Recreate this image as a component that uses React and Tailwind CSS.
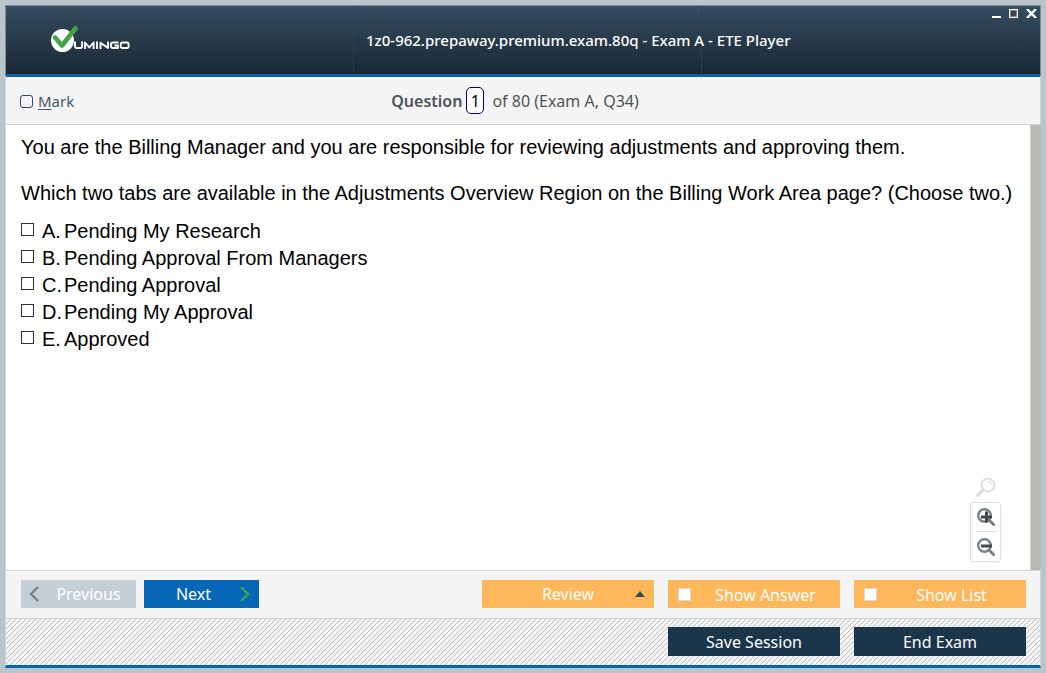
import React from "react";

const options = [
  ["A.", "Pending My Research"],
  ["B.", "Pending Approval From Managers"],
  ["C.", "Pending Approval"],
  ["D.", "Pending My Approval"],
  ["E.", "Approved"],
];

function Logo() {
  return (
    <svg width="80" height="28" viewBox="0 0 80 28" role="img" aria-label="Vumingo">
      <circle cx="11.5" cy="15.5" r="11.5" fill="#fff" />
      <path d="M4 12.5 L11 20.5 L24.5 3.5" fill="none" stroke="#45a545" strokeWidth="4.8" strokeLinecap="round" strokeLinejoin="round" />
      <g fill="none" stroke="#fff" strokeWidth="1.9" strokeLinejoin="round">
        <path d="M24 16.500v4.700q0 1.800 1.800 1.800h3.500q1.800 0 1.800-1.800V16.500" />
        <path d="M34 24v-6.500l4.300 5 4.300-5V24" />
        <path d="M46 16.500V24" />
        <path d="M49.500 24v-6.200l7.500 5.200V16.500" />
        <path d="M67.500 17.500h-5.500q-2 0-2 2V21q0 2 2 2h5v-2.500h-3.500" />
        <rect x="69.800" y="17.500" width="7.800" height="5.500" rx="1.800" />
      </g>
    </svg>
  );
}

function Magnifier({ sign, pale }) {
  return pale ? (
    <svg width="20" height="20" viewBox="0 0 20 20" fill="none" stroke="#e0e0e0" aria-hidden="true">
      <circle cx="12" cy="8" r="6.500" strokeWidth="2.200" />
      <path d="M7 13 L2 18" strokeWidth="3.400" strokeLinecap="round" />
      <path d="M12 4.500q3 0 3.500 3.500" strokeWidth="1.400" />
    </svg>
  ) : (
    <svg width="18" height="18" viewBox="0 0 18 18" fill="none" aria-hidden="true">
      <circle cx="7.500" cy="7.500" r="6.300" stroke="#73828c" strokeWidth="2.400" />
      <path d="M12.300 12.300 L16.500 16.500" stroke="#73828c" strokeWidth="3" strokeLinecap="round" />
      <path d={sign === "+" ? "M4 9h11M9.500 3.500v11" : "M4 8h11"} stroke="#484848" strokeWidth="3" />
    </svg>
  );
}

export default function App() {
  return (
    <div className="flex min-h-screen flex-col bg-[#b9c5cb] p-[5px] font-['Noto_Sans',sans-serif]">
      <main className="flex grow flex-col">
        <header className="grid h-[69px] grid-cols-[348px_348px_1fr] items-center border border-b-0 border-[#7f8c92] bg-linear-to-b from-[#364e62] to-[#1a2733] text-white">
          <div className="flex h-full items-center border-r border-dotted border-[#35407a] pb-[2px] pl-[45px]">
            <Logo />
          </div>
          <h1 className="flex h-full items-center border-r border-[#2f4050] pl-3 text-[15px] font-medium whitespace-nowrap">
            1z0-962.prepaway.premium.exam.80q - Exam A - ETE Player
          </h1>
          <div className="flex h-full items-start justify-end gap-2 pt-[3px] pr-[3px]">
            <button aria-label="Minimize">
              <svg width="9" height="9" viewBox="0 0 9 9"><path d="M0 8h9" stroke="#fff" strokeWidth="2" /></svg>
            </button>
            <button aria-label="Maximize">
              <svg width="9" height="9" viewBox="0 0 9 9" fill="none"><rect x=".5" y=".5" width="8" height="8" stroke="#fff" /><rect x="1.500" y="1.500" width="6" height="6" stroke="#8c8078" /></svg>
            </button>
            <button aria-label="Close">
              <svg width="11" height="9" viewBox="0 0 11 9"><path d="M1 0l9 9M10 0L1 9" stroke="#fff" strokeWidth="2.400" /></svg>
            </button>
          </div>
        </header>

        <section className="grid h-[51px] grid-cols-[1fr_auto_1fr] items-center border-x border-t-3 border-b border-[#d2d2d2] border-t-[#0663b1] bg-[#f4f4f4] pr-4 text-base text-[#4d5358]">
          <label className="flex items-center gap-[5px] pt-px pl-[14px] text-[15px] text-[#44586a]">
            <input type="checkbox" className="size-[13px] appearance-none rounded-[3px] border border-[#34495e] checked:bg-[#34495e]" />
            <span><span className="underline underline-offset-2">M</span>ark</span>
          </label>
          <div className="flex items-center justify-center whitespace-nowrap">
            <label htmlFor="number" className="font-semibold">Question</label>
            <input id="number" defaultValue="1" className="mr-2 ml-1 h-[27px] w-[18px] rounded-[5px] border border-[#000080] bg-white text-center text-black" />
            <span>of 80 (Exam A, Q34)</span>
          </div>
        </section>

        <section className="flex grow border-b border-l border-[#d2d2d2] bg-white font-['Liberation_Sans',sans-serif] text-xl text-black">
          <div className="relative grow pt-2 pl-[15px]">
            <p className="leading-7">You are the Billing Manager and you are responsible for reviewing adjustments and approving them.</p>
            <p className="mt-[18px] leading-7">Which two tabs are available in the Adjustments Overview Region on the Billing Work Area page? (Choose two.)</p>
            <ul className="mt-[10px]">
              {options.map(([letter, text]) => (
                <li key={letter}>
                  <label className="flex h-[27px] items-center">
                    <input type="checkbox" className="mr-2 mb-[2px] size-[13px] appearance-none border border-[#333] checked:bg-[#333]" />
                    <span className="w-[22px]">{letter}</span>
                    <span>{text}</span>
                  </label>
                </li>
              ))}
            </ul>
            <div className="absolute right-[29px] bottom-2 flex w-[31px] flex-col items-center gap-[5px]">
              <button aria-label="Reset zoom"><Magnifier pale /></button>
              <div className="flex w-full flex-col items-center rounded-[3px] border border-[#dedede] shadow-xs">
                <button aria-label="Zoom in" className="flex h-[29px] w-[19px] items-center justify-center border-b border-[#dedede]"><Magnifier sign="+" /></button>
                <button aria-label="Zoom out" className="flex h-[29px] items-center"><Magnifier sign="-" /></button>
              </div>
            </div>
          </div>
          <div className="w-[11px] border-l border-[#d2d2d2] bg-[#bbb9b5]" />
        </section>

        <section className="flex h-[48px] items-start border border-[#d2d2d2] border-t-white bg-[#f4f4f4] px-[15px] pt-2 pr-[14px] text-base text-white">
          <button disabled className="relative h-7 w-[115px] bg-[#c4ced7] pl-5">
            Previous
            <svg className="absolute top-1.5 left-2" width="10" height="16" viewBox="0 0 10 16" fill="none" stroke="#76828e" strokeWidth="2.400"><path d="M9 1L2 8l7 7" /></svg>
          </button>
          <button className="relative ml-2 h-7 w-[115px] bg-[#0766b5] pr-4">
            Next
            <svg className="absolute top-1.5 right-[9px]" width="10" height="16" viewBox="0 0 10 16" fill="none" stroke="#3fa64b" strokeWidth="2.400"><path d="M1 1l7 7-7 7" /></svg>
          </button>
          <div className="ml-auto flex gap-[14px]">
            <button className="relative h-7 w-[172px] bg-[#ffb75c]">
              Review
              <svg className="absolute top-[11px] right-[9px]" width="10" height="6" viewBox="0 0 10 6"><path d="M0 6L5 0l5 6z" fill="#34495e" /></svg>
            </button>
            {["Show Answer", "Show List"].map((text) => (
              <label key={text} className="flex h-7 w-[172px] items-center bg-[#ffb75c] pl-[10px]">
                <input type="checkbox" className="size-[13px] appearance-none border border-[#d6d6d6] bg-white checked:bg-[#34495e]" />
                <span className="grow pt-px text-center">{text}</span>
              </label>
            ))}
          </div>
        </section>

        <footer className="relative flex h-[49px] items-start justify-end gap-[14px] border-x border-b-3 border-x-[#d2d2d2] border-b-[#0663b1] bg-[#f4f4f4] pt-2 pr-[14px] text-base text-white">
          <svg className="absolute inset-0 size-full" shapeRendering="crispEdges" aria-hidden="true">
            <defs>
              <pattern id="hatch" width="5" height="5" patternUnits="userSpaceOnUse">
                {[0, 1, 2, 3, 4].map((n) => <rect key={n} x={4 - n} y={n} width="1" height="1" fill="#c0c0c0" />)}
              </pattern>
            </defs>
            <rect width="100%" height="100%" fill="url(#hatch)" />
          </svg>
          <button className="relative h-[29px] w-[172px] bg-[#1b354a]">Save Session</button>
          <button className="relative h-[29px] w-[172px] bg-[#1b354a]">End Exam</button>
        </footer>
      </main>
    </div>
  );
}
